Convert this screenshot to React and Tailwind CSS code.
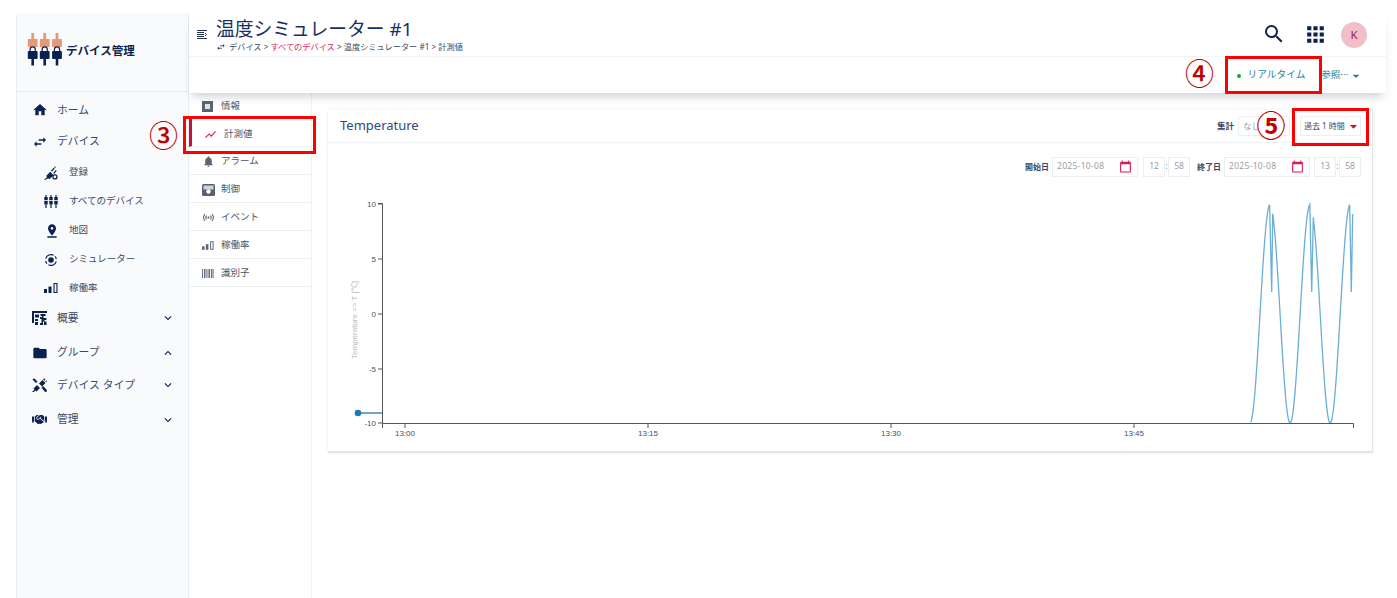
import React from "react";
import {
  MdHome, MdSwapHoriz, MdPinDrop, MdFolder, MdKeyboardArrowDown, MdKeyboardArrowUp, MdSearch, MdApps,
  MdShowChart, MdNotifications, MdSensors, MdCalendarToday, MdArrowDropDown,
} from "react-icons/md";
import { FaHandshake } from "react-icons/fa";

const NAVY = "#0b2150";

function Bars({ className = "" }) {
  return (
    <svg viewBox="0 0 14 10" className={className} fill="currentColor">
      <rect x="0" y="6" width="3" height="4" />
      <rect x="4.5" y="3.5" width="3" height="6.5" />
      <path d="M9.5 0h4v10h-4zM10.6 1.1v7.8h1.8V1.1z" fillRule="evenodd" />
    </svg>
  );
}

function Logo() {
  const xs = [32.7, 44.7, 57];
  return (
    <svg viewBox="26 30 38 38" className="h-[38px] w-[38px] shrink-0">
      {xs.map((x) => (
        <g key={x}>
          <rect x={x - 1.4} y="33" width="2.8" height="7" fill="#e29a78" />
          <rect x={x - 4.9} y="39" width="9.8" height="8" fill="#e29a78" />
          <path d={`M${x - 2.6} 51v-1.5a2.6 2.6 0 0 1 5.2 0V51`} fill="none" stroke={NAVY} strokeWidth="1.2" />
          <rect x={x - 4.9} y="51" width="9.8" height="8" rx="1" fill={NAVY} />
          <rect x={x - 1.3} y="59" width="2.6" height="6.5" fill={NAVY} />
        </g>
      ))}
    </svg>
  );
}

function RegisterIcon() {
  return (
    <svg viewBox="0 0 16 16" className="h-[14px] w-[14px]" fill={NAVY}>
      <path d="M0 16l3.500-3.500-1-1 4.500-5 4 4-5 4.500-1-1L1 16z" />
      <path d="M8 5.500l3-3.500 1 1-3 3.500zM10.500 8l3-3.500 1 1-3 3.500z" />
      <path d="M12 0l1.500 1.500L12 3z" />
      <circle cx="12.500" cy="12.500" r="2.300" fill="none" stroke={NAVY} strokeWidth="1.400" />
    </svg>
  );
}

function AllDevicesIcon() {
  return (
    <svg viewBox="0 0 14 13" className="h-[13px] w-[14px]" fill={NAVY}>
      {[2, 7, 12].map((x) => (
        <g key={x}>
          <rect x={x - 0.6} y="0" width="1.200" height="2" />
          <rect x={x - 1.700} y="2" width="3.400" height="3.200" />
          <rect x={x - 1.700} y="6" width="3.400" height="3.500" />
          <rect x={x - 0.6} y="9.500" width="1.200" height="3.500" />
        </g>
      ))}
    </svg>
  );
}

function SimIcon() {
  return (
    <svg viewBox="0 0 16 16" className="h-[14px] w-[14px]" fill="none" stroke={NAVY} strokeWidth="1.300">
      <circle cx="8" cy="8" r="3.200" fill={NAVY} stroke="none" />
      <path d="M2 6.500A6.200 6.200 0 0 1 11 2.600M14 9.500A6.200 6.200 0 0 1 5 13.400M1.900 9A6.200 6.200 0 0 0 3.400 12.200M14.100 7A6.200 6.200 0 0 0 12.600 3.800" />
    </svg>
  );
}

function OverviewIcon() {
  return (
    <svg viewBox="0 0 15 14" className="h-[14px] w-[15px]" fill={NAVY}>
      <path d="M0 0h15v2H2v10H0z" />
      <rect x="3" y="3.500" width="4" height="3" />
      <rect x="3" y="8" width="3" height="2" />
      <rect x="3" y="11" width="3" height="3" />
      <path d="M8.500 3h5v2h-2v2h3v2h-2v1.500h2V14H12v-3.500h-1V14H8v-2h1.500V8H8V6h2V5H8.500z" />
    </svg>
  );
}

function DeviceTypeIcon() {
  return (
    <svg viewBox="0 0 15 14" className="h-[14px] w-[15px]" fill={NAVY}>
      <path d="M0 14l2.500-2.500-1-1L5 7l3 3-3.500 3.500-1-1L1 14.500z" />
      <path d="M7 5.500L10.500 2l3 3L10 8.500zM11 1.200l1-1 1.500 1.500-1 1zM13.300 3.500l1-1 .7.700-1 1z" />
      <path d="M0.500 1l2-.500 3 3-1.500 1.500-3-3zM9.500 9.500L11 8l3.500 3.500.500 2-2 .500z" />
    </svg>
  );
}

function InfoIcon() {
  return <div className="flex h-[11px] w-[11px] items-center justify-center bg-[#5a6472]"><div className="h-[5px] w-[5px] bg-[#dfe3e8]" /></div>;
}

function ControlIcon() {
  return (
    <svg viewBox="0 0 13 12" className="h-[12px] w-[13px]">
      <rect width="13" height="12" rx="1.500" fill="#56606e" />
      <rect x="1.500" y="1.500" width="10" height="4" fill="#cfd4da" />
      <circle cx="6.500" cy="7.500" r="2.200" fill="#fff" />
    </svg>
  );
}

function BarcodeIcon() {
  return (
    <svg viewBox="0 0 12 9" className="h-[9px] w-[12px]" fill="#6a7480">
      {[0, 2, 3.500, 5.500, 7, 9, 10.500].map((x) => <rect key={x} x={x} y="0" width="1.100" height="9" />)}
    </svg>
  );
}

function MainItem({ icon, label, chevron, h }) {
  return (
    <div className={`flex items-center pl-[15px] pr-[13px] ${h}`}>
      <div className="flex w-[25px] items-center justify-start text-[#0b2150]">{icon}</div>
      <span className="flex-1 text-[10.800px] text-[#3a4a66]">{label}</span>
      {chevron === "down" && <MdKeyboardArrowDown className="text-[14px] text-[#0b2150]" />}
      {chevron === "up" && <MdKeyboardArrowUp className="text-[14px] text-[#0b2150]" />}
    </div>
  );
}

function SubItem({ icon, label, h = "h-[29px]" }) {
  return (
    <div className={`flex items-center pl-[27px] pt-[2px] ${h}`}>
      <div className="flex w-[25px] items-center justify-start text-[#0b2150]">{icon}</div>
      <span className="text-[9.500px] text-[#3a4a66]">{label}</span>
    </div>
  );
}

function SubNavRow({ icon, label, h = "h-[28px]" }) {
  return (
    <div className={`flex items-center border-b border-[#eef0f2] pl-[13px] pt-[2px] ${h}`}>
      <div className="flex w-[19px] items-center justify-start">{icon}</div>
      <span className="text-[9.500px] text-[#4a5568]">{label}</span>
    </div>
  );
}

function DateBox({ value }) {
  return (
    <div className="flex h-[20px] w-[86px] items-center justify-between border border-[#eceef0] pl-[4px] pr-[5px] text-[8.500px] tracking-[0.3px] text-[#9aa0a6]">
      <span>{value}</span>
      <MdCalendarToday className="text-[13px] text-[#d81b60]" />
    </div>
  );
}

function TimeBox({ value }) {
  return <div className="flex h-[20px] w-[22px] items-center justify-center border border-[#eceef0] text-[8.500px] text-[#9aa0a6]">{value}</div>;
}

function sinePath() {
  let d = "";
  const T = 40.1, mid = 313.7, amp = 109.3, seg = [[1250.7, 1270], [1272.7, 1310], [1313.3, 1350]];
  const minAt = 1250;
  seg.forEach(([a, b], i) => {
    for (let x = a; x <= b + 0.01; x += 0.7) {
      const y = mid + amp * Math.cos(((x - minAt) / T) * 2 * Math.PI);
      d += `${x === a && i === 0 ? "M" : "L"}${x.toFixed(1)} ${Math.min(423, y).toFixed(1)} `;
    }
    if (i < 2) {
      d += `L${b + 1.7} 292 `;
    }
  });
  d += "L1351.300 292 L1352.700 214";
  return d;
}

function Chart() {
  const yt = [[204, "10"], [259, "5"], [314, "0"], [369, "-5"], [423, "-10"]];
  const xt = [[405, "13:00"], [648, "13:15"], [891, "13:30"], [1134, "13:45"]];
  return (
    <svg viewBox="328 180 1045 271" className="block h-[271px] w-[1045px]" style={{ fontFamily: "'Liberation Sans', sans-serif" }}>
      <path d="M358 413H383" stroke="#1f77b4" strokeWidth="1.300" fill="none" />
      <circle cx="358" cy="413" r="3.300" fill="#1f77b4" />
      <path d={sinePath()} stroke="#6baed6" strokeWidth="1.300" fill="none" />
      <path d="M378 203.500H382.500V423.500H1353.500V428M382.500 423.500V428" stroke="#555" fill="none" />
      {yt.map(([y, t]) => (
        <g key={t}>
          <path d={`M378 ${y}H382`} stroke="#555" />
          <text x="376" y={y + 3} textAnchor="end" fontSize="8" fill="#44506a">{t}</text>
        </g>
      ))}
      {xt.map(([x, t]) => (
        <g key={t}>
          <path d={`M${x} 423V428`} stroke="#555" />
          <text x={x} y="436" textAnchor="middle" fontSize="8" fill="#44506a">{t}</text>
        </g>
      ))}
      <text transform="translate(357 320) rotate(-90)" textAnchor="middle" fontSize="8" fill="#bbbbbb">Temperature =&gt; T [℃]</text>
    </svg>
  );
}

export default function App() {
  return (
    <div
      className="relative flex h-[598px] w-[1397px] overflow-hidden bg-white pl-[16px] pr-[11px] pt-[13px]"
      style={{ fontFamily: "'Noto Sans', 'Noto Sans CJK JP', sans-serif" }}
    >
      {/* Sidebar */}
      <aside className="w-[173px] shrink-0 rounded-tl-[4px] border-x border-[#e8ebef] bg-[#f9fafc]">
        <div className="flex h-[79px] items-center border-b border-[#e8ebef] pb-[6px] pl-[9px]">
          <Logo />
          <span className="ml-[2px] mt-[3px] text-[11.500px] font-bold text-[#0b2150]">デバイス管理</span>
        </div>
        <div className="pt-[2px]">
          <MainItem h="h-[32px]" icon={<MdHome className="text-[16px]" />} label="ホーム" />
          <MainItem h="h-[31px]" icon={<MdSwapHoriz className="text-[16px]" />} label="デバイス" />
          <SubItem icon={<RegisterIcon />} label="登録" />
          <SubItem icon={<AllDevicesIcon />} label="すべてのデバイス" />
          <SubItem icon={<MdPinDrop className="text-[16px]" />} label="地図" />
          <SubItem icon={<SimIcon />} label="シミュレーター" />
          <SubItem h="h-[28px]" icon={<Bars className="h-[10px] w-[14px]" />} label="稼働率" />
          <MainItem h="h-[34px]" icon={<OverviewIcon />} label="概要" chevron="down" />
          <MainItem h="h-[33px] pt-[2px]" icon={<MdFolder className="text-[16px]" />} label="グループ" chevron="up" />
          <MainItem h="h-[34px]" icon={<DeviceTypeIcon />} label="デバイス タイプ" chevron="down" />
          <MainItem h="h-[33px] pt-[2px]" icon={<FaHandshake className="text-[15px]" />} label="管理" chevron="down" />
        </div>
      </aside>

      {/* Main */}
      <div className="flex min-w-0 flex-1 flex-col">
        <header className="relative z-10 h-[80px] shrink-0 bg-white shadow-[0_7px_8px_-3px_rgba(90,105,125,0.28)]">
          <div className="flex h-[44px] items-center border-b border-[#f2f3f5] pl-[8px] pr-[19px]">
            <svg viewBox="0 0 10 9" className="h-[9px] w-[10px]" fill="none" stroke="#26344f" strokeWidth="1">
              <path d="M0 .5h10M0 2.500h7M0 4.500h7M0 6.500h7M0 8.500h10M8 3l1.500 1.500L8 6" />
            </svg>
            <div className="ml-[9px] flex-1">
              <div className="text-[18.800px] leading-[24px] text-[#17305f]">温度シミュレーター #1</div>
              <div className="flex items-center text-[8.200px] leading-[11px] text-[#3a4a66]">
                <MdSwapHoriz className="mr-[3px] text-[10px]" />
                <span>デバイス &gt;&nbsp;</span>
                <span className="text-[#e0245e]">すべてのデバイス</span>
                <span>&nbsp;&gt; 温度シミュレーター #1 &gt; 計測値</span>
              </div>
            </div>
            <MdSearch className="mb-[2px] mr-[1px] text-[24px] text-[#0b2150]" />
            <MdApps className="mb-[1px] ml-[16px] mr-[1px] text-[25px] text-[#0b2150]" />
            <div className="ml-[12px] mt-[1px] flex h-[26px] w-[26px] items-center justify-center rounded-full bg-[#f2bfc9] text-[11.500px] text-[#a02050]">K</div>
          </div>
          <div className="flex h-[35px] items-center justify-end pr-[22px] pt-[2px] text-[9.500px] text-[#2a7d9c]">
            <span className="mr-[7px] h-[4px] w-[4px] rounded-full bg-[#10b010]" />
            <span className="mr-[16px] text-[9.700px]">リアルタイム</span>
            <span>参照···</span>
            <MdArrowDropDown className="text-[16px]" />
          </div>
        </header>

        <div className="flex min-h-0 flex-1">
          <nav className="w-[123px] shrink-0 border-r border-[#eef0f2]">
            <SubNavRow h="h-[26px]" icon={<InfoIcon />} label="情報" />
            <div className="flex h-[28px] items-center border-b border-[#eef0f2] border-l-[3px] border-l-[#c2103f] pl-[12px] pt-[3px]">
              <div className="flex w-[20px] items-center"><MdShowChart className="text-[13px] text-[#d81b60]" /></div>
              <span className="text-[9.500px] text-[#4a5568]">計測値</span>
            </div>
            <SubNavRow icon={<MdNotifications className="text-[13px] text-[#5a6472]" />} label="アラーム" />
            <SubNavRow icon={<ControlIcon />} label="制御" />
            <SubNavRow icon={<MdSensors className="text-[13px] text-[#5a6472]" />} label="イベント" />
            <SubNavRow icon={<Bars className="h-[9px] w-[12px] text-[#5a6472]" />} label="稼働率" />
            <SubNavRow icon={<BarcodeIcon />} label="識別子" />
          </nav>

          <main className="min-w-0 flex-1 pl-[16px] pr-[13px] pt-[17px]">
            <section className="w-[1045px] border-b-2 border-r border-[#e4e6ea] shadow-[0_0_3px_rgba(60,70,90,0.12)]">
              <div className="flex h-[33px] items-center border-b border-[#f0f1f3] pl-[12px] pr-[11px]">
                <h2 className="flex-1 text-[13px] text-[#2c4a7c]">Temperature</h2>
                <span className="mr-[4px] text-[8.500px] font-bold text-[#3a4a66]">集計</span>
                <div className="mr-[10px] flex h-[20px] w-[52px] items-center justify-between border border-[#eceef0] pl-[4px] text-[8.500px] text-[#9aa0a6]">
                  <span>なし</span>
                  <MdArrowDropDown className="text-[14px] text-[#c2185b]" />
                </div>
                <div className="flex h-[20px] w-[61px] items-center justify-between border border-[#eceef0] pl-[3px] pr-[1px] text-[8px] text-[#3a4a66]">
                  <span className="whitespace-nowrap">過去 1 時間</span>
                  <MdArrowDropDown className="shrink-0 text-[17px] text-[#c2103f]" />
                </div>
              </div>
              <div className="flex h-[37px] items-center justify-end pr-[11px] pt-[10px]">
                <span className="mr-[3px] text-[8px] font-bold text-[#3a4a66]">開始日</span>
                <DateBox value="2025-10-08" />
                <div className="ml-[5px]"><TimeBox value="12" /></div>
                <span className="w-[3px] text-center text-[8.500px] text-[#5b9bd5]">:</span>
                <TimeBox value="58" />
                <span className="ml-[7px] mr-[3px] text-[8px] font-bold text-[#3a4a66]">終了日</span>
                <DateBox value="2025-10-08" />
                <div className="ml-[4px]"><TimeBox value="13" /></div>
                <span className="w-[3px] text-center text-[8.500px] text-[#5b9bd5]">:</span>
                <TimeBox value="58" />
              </div>
              <Chart />
            </section>
          </main>
        </div>
      </div>

      {/* Annotation overlays */}
      <div className="absolute left-[183px] top-[116px] z-20 h-[38px] w-[133px] border-[3px] border-[#ff0000]" />
      <div className="absolute left-[1225px] top-[56px] z-20 h-[38px] w-[97px] border-[3px] border-[#ff0000]" />
      <div className="absolute left-[1292px] top-[108px] z-20 h-[38px] w-[77px] border-[3px] border-[#ff0000]" />
      <span className="absolute left-[149px] top-[118px] z-20 text-[29px] font-medium leading-[36px] text-[#c00000]">③</span>
      <span className="absolute left-[1185px] top-[56px] z-20 text-[29px] font-medium leading-[36px] text-[#c00000]">④</span>
      <span className="absolute left-[1258px] top-[113px] z-20 flex h-[26px] w-[26px] items-center justify-center rounded-full bg-white text-[29px] font-bold leading-[26px] text-[#c00000]">⑤</span>
    </div>
  );
}
